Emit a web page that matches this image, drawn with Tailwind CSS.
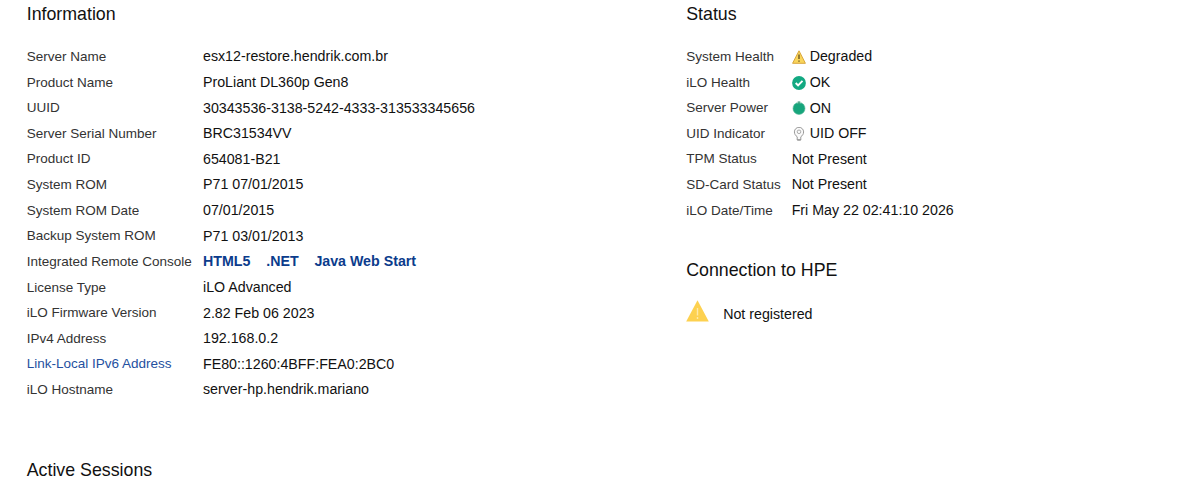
<!DOCTYPE html>
<html lang="en">

<head>
        <meta charset="UTF-8">
        <meta name="viewport" content="width=device-width, initial-scale=1.0">
        <title>iLO Overview</title>
        <script src="https://cdn.jsdelivr.net/npm/@tailwindcss/browser@4"></script>
</head>

<body class="bg-white overflow-hidden font-['Liberation_Sans',Arial,sans-serif] text-[#111]">

        <div class="grid grid-cols-[659.5px_1fr] pl-[26.7px] whitespace-nowrap">
                <div>
                        <h2 class="text-[17.8px] leading-7 mb-[16.2px]">Information</h2>
                        <dl class="grid grid-cols-[176.3px_1fr] auto-rows-[25.64px] items-center text-[14.22px] [&>dt]:text-[13.5px] [&>dt]:text-[#333]">
                                <dt>Server Name</dt>
                                <dd>esx12-restore.hendrik.com.br</dd>
                                <dt>Product Name</dt>
                                <dd>ProLiant DL360p Gen8</dd>
                                <dt>UUID</dt>
                                <dd>30343536-3138-5242-4333-313533345656</dd>
                                <dt>Server Serial Number</dt>
                                <dd>BRC31534VV</dd>
                                <dt>Product ID</dt>
                                <dd>654081-B21</dd>
                                <dt>System ROM</dt>
                                <dd>P71 07/01/2015</dd>
                                <dt>System ROM Date</dt>
                                <dd>07/01/2015</dd>
                                <dt>Backup System ROM</dt>
                                <dd>P71 03/01/2013</dd>
                                <dt>Integrated Remote Console</dt>
                                <dd class="flex gap-[15.8px] font-bold text-[#0b3c8c]">
                                        <a href="#">HTML5</a>
                                        <a href="#">.NET</a>
                                        <a href="#">Java Web Start</a>
                                </dd>
                                <dt>License Type</dt>
                                <dd>iLO Advanced</dd>
                                <dt>iLO Firmware Version</dt>
                                <dd>2.82 Feb 06 2023</dd>
                                <dt>IPv4 Address</dt>
                                <dd>192.168.0.2</dd>
                                <dt><a href="#" class="text-[#2450a0]">Link-Local IPv6 Address</a></dt>
                                <dd>FE80::1260:4BFF:FEA0:2BC0</dd>
                                <dt>iLO Hostname</dt>
                                <dd>server-hp.hendrik.mariano</dd>
                        </dl>
                        <h2 class="text-[17.8px] leading-7 mt-[52.8px]">Active Sessions</h2>
                </div>

                <div>
                        <h2 class="text-[17.8px] leading-7 mb-[16.2px]">Status</h2>
                        <dl class="grid grid-cols-[105.5px_1fr] auto-rows-[25.64px] items-center text-[14.22px] [&>dt]:text-[13.5px] [&>dt]:text-[#333]">
                                <dt>System Health</dt>
                                <dd class="flex items-center gap-1">
                                        <svg class="w-3.5 h-3.5" viewBox="0 0 14 14">
                                                <path d="M7 .8 13.4 13.3H.6Z" fill="#f9d55b" stroke="#d9a63c" stroke-linejoin="round" />
                                                <path d="M7 4.5v4.6M7 10.4v1.4" stroke="#5e4a1c" stroke-width="1.3" />
                                        </svg>
                                        Degraded
                                </dd>
                                <dt>iLO Health</dt>
                                <dd class="flex items-center gap-1">
                                        <svg class="w-3.5 h-3.5" viewBox="0 0 14 14">
                                                <circle cx="7" cy="7" r="6.9" fill="#13a982" />
                                                <path d="m3.7 7 2.4 2.5 4.4-4.6" fill="none" stroke="#fff" stroke-width="1.9" />
                                        </svg>
                                        OK
                                </dd>
                                <dt>Server Power</dt>
                                <dd class="flex items-center gap-1">
                                        <svg class="w-3.5 h-3.5" viewBox="0 0 14 14">
                                                <circle cx="7" cy="7.4" r="6" fill="#17a57c" stroke="#55b795" stroke-width=".6" />
                                                <path d="M5.9 0v2.6M8.1 0v2.6" stroke="#b5dccd" stroke-width=".8" />
                                                <path d="M7 .3v3" stroke="#3f9b7c" stroke-width="1.3" />
                                        </svg>
                                        ON
                                </dd>
                                <dt>UID Indicator</dt>
                                <dd class="flex items-center gap-1">
                                        <svg class="w-3.5 h-3.5" viewBox="0 0 14 14" fill="none" stroke="#999">
                                                <path d="M5.2 13V9.8C3.5 8.6 2.4 7 2.4 4.9a4.6 4.6 0 0 1 9.2 0C11.6 7 10.5 8.6 8.8 9.8V13Z" fill="#fafafa" />
                                                <circle cx="7" cy="4.8" r="1.8" stroke-width=".8" />
                                                <path d="M5.4 12.9h3.2" stroke="#888" />
                                        </svg>
                                        UID OFF
                                </dd>
                                <dt>TPM Status</dt>
                                <dd>Not Present</dd>
                                <dt>SD-Card Status</dt>
                                <dd>Not Present</dd>
                                <dt>iLO Date/Time</dt>
                                <dd>Fri May 22 02:41:10 2026</dd>
                        </dl>
                        <h2 class="text-[17.8px] leading-7 mt-[32.8px]">Connection to HPE</h2>
                        <div class="flex items-start gap-3.5 mt-4 text-[14.22px]">
                                <svg class="w-[23px] h-[22px]" viewBox="0 0 23 22">
                                        <path d="M11.5.3 22.8 21.5H.2Z" fill="#fdd150" />
                                        <path d="M11.5 8v7.5M11.5 17v2" stroke="#ffe9a8" stroke-width="1.4" />
                                </svg>
                                <span class="pt-1">Not registered</span>
                        </div>
                </div>
        </div>

</body>

</html>
